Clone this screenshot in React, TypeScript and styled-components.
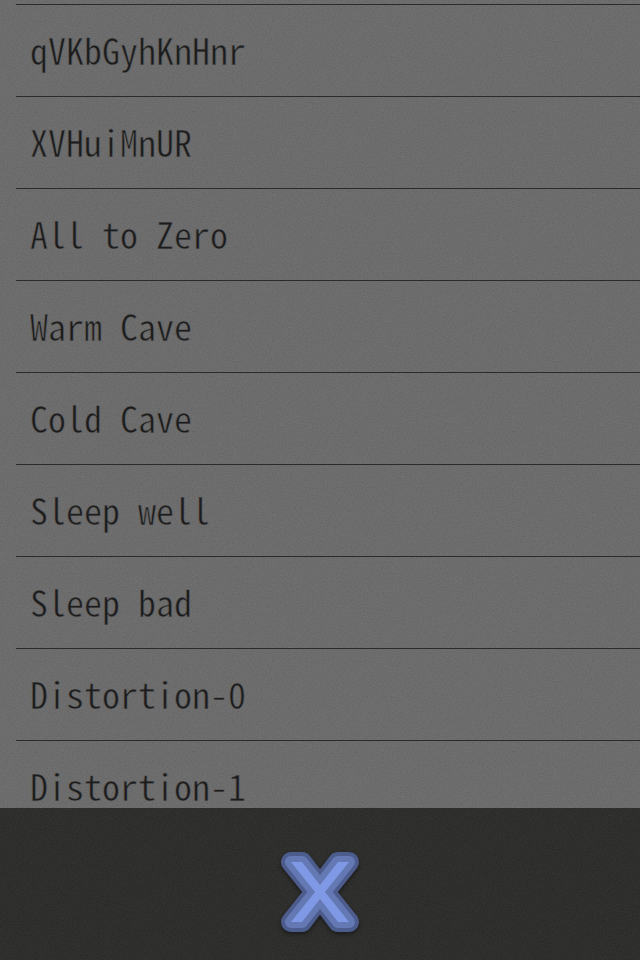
import React from "react";
import styled, { createGlobalStyle } from "styled-components";

const grain = (alpha: number) =>
  `url("data:image/svg+xml,${encodeURIComponent(
    `<svg xmlns="http://www.w3.org/2000/svg" width="320" height="320"><filter id="n" x="0" y="0" width="100%" height="100%"><feTurbulence type="fractalNoise" baseFrequency="0.8" numOctaves="2" stitchTiles="stitch"/><feColorMatrix values="1 0 0 0 0 1 0 0 0 0 1 0 0 0 0 0 0 0 0 ${alpha}"/></filter><rect width="320" height="320" filter="url(#n)"/></svg>`
  )}")`;

const GlobalStyle = createGlobalStyle`
  * { box-sizing: border-box; }
  body { margin: 0; background: #2d2d2d; }
`;

const Screen = styled.main`
  display: flex;
  flex-direction: column;
  height: 100vh;
  overflow: hidden;
  font-family: "Noto Sans Mono CJK JP", "Liberation Mono", monospace;
`;

const PresetList = styled.ul`
  flex: 1;
  min-height: 0;
  margin: 0;
  padding: 4px 0 0 16px;
  overflow: hidden;
  list-style: none;
  background: ${grain(0.12)} #626262;
`;

const PresetRow = styled.li`
  height: 92px;
  border-top: 1px solid #2b2b2b;
`;

const PresetButton = styled.button`
  display: block;
  width: 100%;
  height: 100%;
  padding: 0 14px 4px;
  border: 0;
  background: none;
  color: #1c1c1c;
  font-family: inherit;
  font-size: 36px;
  font-weight: 300;
  line-height: 40px;
  text-align: left;
  white-space: nowrap;
  -webkit-text-stroke: 1px rgba(107, 107, 107, 0.7);
  cursor: pointer;
`;

const Footer = styled.footer`
  display: flex;
  flex: none;
  justify-content: center;
  padding: 40px 0 24px;
  background: ${grain(0.11)} #1d1d1c;
`;

const CloseButton = styled.button`
  display: block;
  padding: 4px;
  border: 0;
  background: none;
  cursor: pointer;

  svg {
    display: block;
    overflow: visible;
    filter: drop-shadow(0 2px 2px rgba(0, 0, 0, 0.45));
  }
`;

const presets = [
  "qVKbGyhKnHnr",
  "XVHuiMnUR",
  "All to Zero",
  "Warm Cave",
  "Cold Cave",
  "Sleep well",
  "Sleep bad",
  "Distortion-0",
  "Distortion-1",
];

const cross = (notch: number) =>
  `M10 10H21L39 ${notch}L57 10H68L44 40L68 70H57L39 ${80 - notch}L21 70H10L34 40Z`;

export default function App() {
  return (
    <>
      <GlobalStyle />
      <Screen>
        <PresetList>
          {presets.map((name) => (
            <PresetRow key={name}>
              <PresetButton type="button">{name}</PresetButton>
            </PresetRow>
          ))}
        </PresetList>
        <Footer>
          <CloseButton type="button" aria-label="Close">
            <svg width="78" height="80" viewBox="0 0 78 80" strokeLinejoin="round">
              <path d={cross(34)} fill="#4c5d8d" stroke="#4c5d8d" strokeWidth="20" />
              <path d={cross(33)} fill="#6479b3" stroke="#6479b3" strokeWidth="12" />
              <path d={cross(33)} fill="#7f99e6" />
            </svg>
          </CloseButton>
        </Footer>
      </Screen>
    </>
  );
}
